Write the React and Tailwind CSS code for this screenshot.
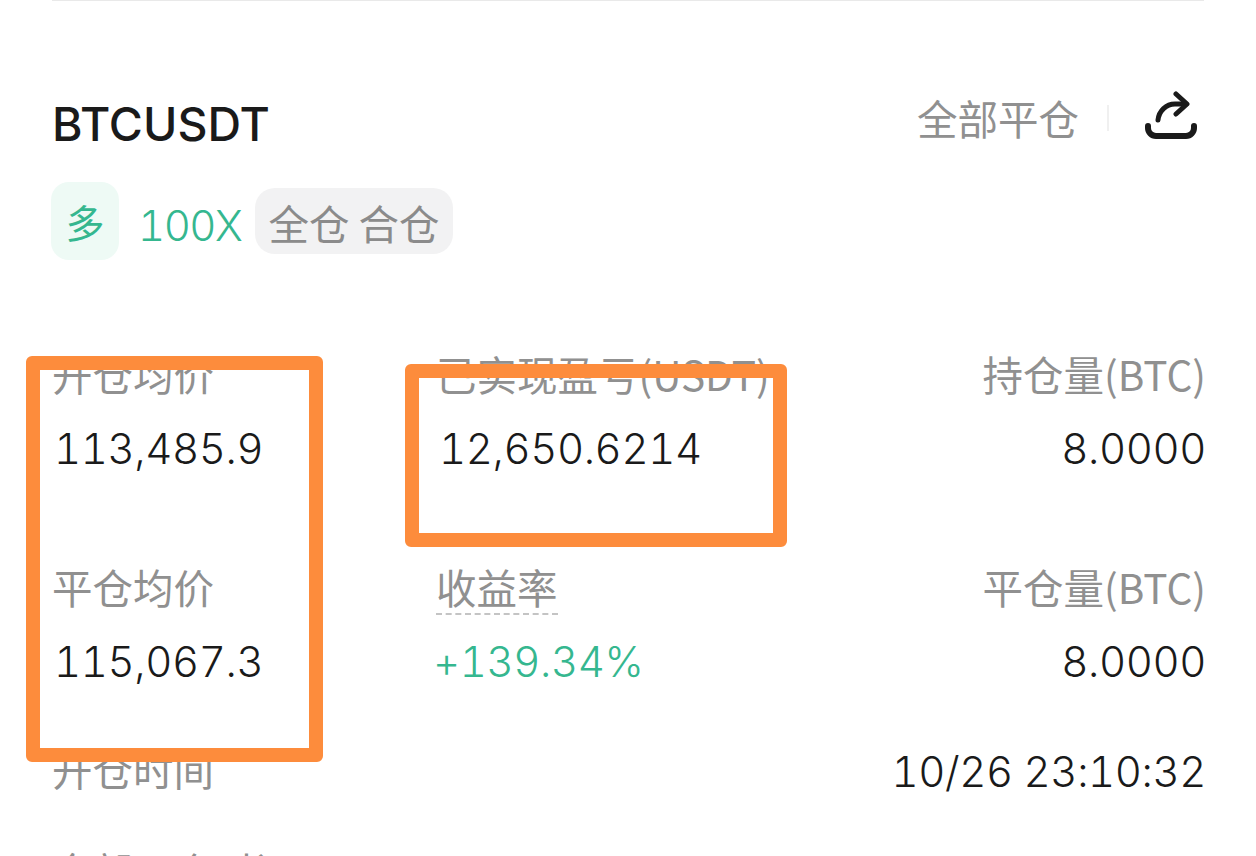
import React from "react";

const cjk = "font-['Noto_Sans_CJK_SC','Noto_Sans',sans-serif]";
const num = "font-['Inter','Noto_Sans_CJK_SC',sans-serif]";

function Label({ children, className = "" }) {
  return <div className={`${cjk} text-[40.5px] leading-[48px] text-[#909090] ${className}`}>{children}</div>;
}

function Value({ children, className = "" }) {
  return <div className={`${num} text-[42px] leading-[50px] font-light tabular-nums tracking-[-0.4px] text-[#1a1a1a] ${className}`}>{children}</div>;
}

function Cell({ label, value, right, valueClass = "" }) {
  return (
    <div className={`flex flex-col h-[213px] gap-[26px] ${right ? "items-end -mr-[2px]" : ""}`}>
      {label}
      <Value className={valueClass}>{value}</Value>
    </div>
  );
}

function ShareIcon() {
  return (
    <svg className="mb-[6px]" width="52" height="48" viewBox="0 0 52 48" fill="none" stroke="#1a1a1a" strokeLinecap="round" strokeLinejoin="round">
      <path d="M3 35v2a8 8 0 0 0 8 8h30a8 8 0 0 0 8-8v-2" strokeWidth="6" />
      <path d="M13 29c1-9 8-16 17-16h11" strokeWidth="5" />
      <path d="M31 3l11 10-11 10" strokeWidth="5" />
    </svg>
  );
}

export default function App() {
  return (
    <div className="relative w-[1256px] h-[856px] overflow-hidden bg-white">
      <div className="mx-[52px] h-px bg-[#e9e9e9]" />

      <div className="px-[52px] pt-[89px]">
        <div className="flex items-center justify-between h-[60px]">
          <h1 className="mt-[8px] font-['Inter',sans-serif] text-[46.5px] font-medium leading-[60px] text-[#1a1a1a]">BTCUSDT</h1>
          <div className="flex items-center mb-[4px] mr-[7px]">
            <Label>全部平仓</Label>
            <div className="ml-[28px] mr-[36px] w-[2px] h-[26px] bg-[#f0f0f0]" />
            <ShareIcon />
          </div>
        </div>

        <div className="flex items-center mt-[32px] -ml-[1px]">
          <div className={`${cjk} flex items-center justify-center w-[68px] h-[78px] rounded-[18px] bg-[#eefaf5] text-[39px] text-[#35b78f]`}>多</div>
          <div className={`${num} ml-[19px] mt-[8px] w-[103px] text-[42px] font-light tabular-nums tracking-[-1.5px] text-[#35b78f]`}>100X</div>
          <div className={`${cjk} ml-[14px] pt-[5px] flex items-center justify-center w-[198px] h-[66px] rounded-[20px] bg-[#f2f2f3] text-[40.5px] text-[#8b8b8b]`}>全仓 合仓</div>
        </div>

        <div className="grid grid-cols-[384px_1fr_auto] mt-[90px]">
          <Cell label={<Label>开仓均价</Label>} value="113,485.9" valueClass="ml-[2px]" />
          <Cell label={<Label>已实现盈亏(USDT)</Label>} value="12,650.6214" valueClass="ml-[3px]" />
          <Cell right label={<Label>持仓量(BTC)</Label>} value="8.0000" />
          <Cell label={<Label>平仓均价</Label>} value="115,067.3" valueClass="ml-[2px]" />
          <Cell
            label={<Label className="border-b-2 border-dashed border-[#c4c4c4] h-[52px] w-fit">收益率</Label>}
            value="+139.34%"
            valueClass="text-[#35b78f] -mt-[4px] -ml-[3px]"
          />
          <Cell right label={<Label>平仓量(BTC)</Label>} value="8.0000" />
        </div>

        <div className="flex items-start justify-between -mt-[31px]">
          <Label>开仓时间</Label>
          <Value className="mt-[2px] -mr-[2px]">10/26 23:10:32</Value>
        </div>
        <Label className="mt-[50px]">全部平仓时间</Label>
      </div>

      <div className="absolute left-[26px] top-[356px] w-[297px] h-[406px] border-[14px] border-[#fd8c3c] rounded-[6px]" />
      <div className="absolute left-[405px] top-[364px] w-[382px] h-[183px] border-[14px] border-[#fd8c3c] rounded-[6px]" />
    </div>
  );
}
